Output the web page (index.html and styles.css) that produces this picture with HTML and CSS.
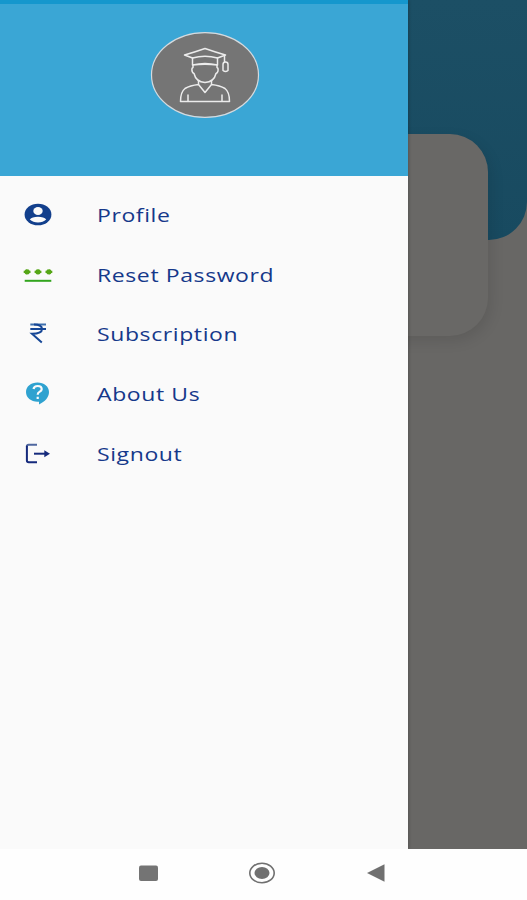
FILE: index.html
```
<!DOCTYPE html>
<html lang="en">
<head>
    <meta charset="UTF-8">
    <meta name="viewport" content="width=device-width, initial-scale=1.0">
    <title>Student Menu</title>
    <link rel="stylesheet" href="styles.css">
</head>
<body>
    <div class="screen">
        <!-- Dimmed page behind the drawer -->
        <main class="page">
            <div class="page-header"></div>
            <div class="page-card"></div>
        </main>

        <aside class="drawer">
            <header class="drawer-header">
                <svg class="avatar" viewBox="0 0 110 88" fill="none" stroke="#ececec" stroke-width="1.5" stroke-linejoin="round" stroke-linecap="round">
                    <ellipse cx="55" cy="44" rx="53.5" ry="42.3" fill="#757575" stroke="#d5dade" stroke-width="1.2"/>
                    <path d="M34.500 24 Q45 21 55 17.500 Q65 21 75.500 24 L67.500 27 Q55 23.500 42.500 27 Z"/>
                    <path d="M42.500 27 V34 Q55 31 67.500 34 V27 M42.500 34 Q55 32.500 67.500 34"/>
                    <path d="M43 34 V36.500 Q41.500 37 42 40 Q42.500 42 44 42.500 Q46 51 55 51.500 Q64 51 66 42.500 Q67.500 42 68 40 Q68.500 37 67 36.500 V34"/>
                    <path d="M74.500 24.500 V31 M73 39.500 V33.500 Q73 31 75.500 31 Q78 31 78 33.500 V39.500 Q75.500 41.500 73 39.500 Z"/>
                    <path d="M48.500 50 V53.500 L55 61.500 L61.500 53.500 V50 M48.500 53.500 Q40 54.500 35 57.500 Q30.500 61 30.500 70.500 H79.500 Q79.500 61 75 57.500 Q70 54.500 61.500 53.500 M38 70 V64 M72 70 V64"/>
                </svg>
            </header>

            <nav class="menu">
                <a class="menu-item">
                    <svg class="icon" viewBox="0 0 32 26">
                        <ellipse cx="16" cy="12.500" rx="13.400" ry="10.800" fill="#123f8c"/>
                        <ellipse cx="16" cy="9" rx="4.700" ry="4" fill="#fafafa"/>
                        <path d="M7.800 17.500 Q10 14.800 16 14.800 Q22 14.800 24.200 17.500 Q21 20.500 16 20.500 Q11 20.500 7.800 17.500 Z" fill="#fafafa"/>
                    </svg>
                    <span class="label">Profile</span>
                </a>
                <a class="menu-item">
                    <svg class="icon" viewBox="0 0 32 26" stroke="#55a616" stroke-width="2.2">
                        <path d="M2.700 18.800 H29.300" stroke="#32a51e" stroke-width="2"/>
                        <path d="M1.700 9.900 H8.500 M3.600 7.700 L6.600 12.100 M6.600 7.700 L3.600 12.100 M12.600 9.900 H19.400 M14.500 7.700 L17.500 12.100 M17.500 7.700 L14.500 12.100 M23.500 9.900 H30.300 M25.400 7.700 L28.400 12.100 M28.400 7.700 L25.400 12.100"/>
                    </svg>
                    <span class="label">Reset Password</span>
                </a>
                <a class="menu-item">
                    <svg class="icon" viewBox="0 0 32 26" fill="none" stroke="#164796" stroke-width="2">
                        <path d="M8.300 3.500 H24" stroke="#3e70ae"/>
                        <path d="M8.300 8 H24"/>
                        <path d="M12 3.500 Q20 3.500 20 8 Q20 12.800 10 12.800 L19.800 21.500"/>
                    </svg>
                    <span class="label">Subscription</span>
                </a>
                <a class="menu-item">
                    <svg class="icon" viewBox="0 0 32 26" fill="#2fa2d0">
                        <path d="M15.500 1.500 C22 1.500 27 5.500 27 11 C27 16.500 23 20.500 17 23.500 V20.700 H15.500 C9 20.700 4 16.600 4 11 C4 5.500 9 1.500 15.500 1.500 Z"/>
                        <path d="M11.500 8 Q12 5 15.700 5 Q19.700 5 19.700 8.200 Q19.700 9.700 17.500 10.900 Q15.700 11.900 15.700 13.800 M15.700 15.800 V18" fill="none" stroke="#fafafa" stroke-width="2.200"/>
                    </svg>
                    <span class="label">About Us</span>
                </a>
                <a class="menu-item">
                    <svg class="icon" viewBox="0 0 32 26" fill="none" stroke="#152a7c" stroke-width="2">
                        <path d="M15 3.700 H6.500 Q4.900 3.700 4.900 5.500" stroke="#4f679f"/>
                        <path d="M4.900 4.700 V19.500 Q4.900 21.300 6.700 21.300 H15"/>
                        <path d="M12 12.700 H24"/>
                        <path d="M22.300 9.200 L28 12.700 L22.300 16.200 Z" fill="#152a7c" stroke="none"/>
                    </svg>
                    <span class="label">Signout</span>
                </a>
            </nav>
        </aside>
    </div>

    <!-- System navigation -->
    <footer class="navbar">
        <svg viewBox="0 0 30 26"><rect x="6" y="5.500" width="19" height="15.500" rx="2" fill="#747474"/></svg>
        <svg viewBox="0 0 30 26">
            <ellipse cx="15" cy="13" rx="12.200" ry="9.800" fill="none" stroke="#707070" stroke-width="1.600"/>
            <ellipse cx="15" cy="13" rx="7.500" ry="6" fill="#707070"/>
        </svg>
        <svg viewBox="0 0 30 26"><path d="M6 13 L23.500 4.200 V21.800 Z" fill="#707070"/></svg>
    </footer>
</body>
</html>
```
FILE: styles.css
```
* { box-sizing: border-box; }
body { margin: 0; height: 900px; display: flex; flex-direction: column; background: #fefefe; font-family: "Open Sans", "Noto Sans", sans-serif; overflow: hidden; }

.screen { position: relative; height: 849px; overflow: hidden; }

.page { height: 100%; background: #686765; }
.page-header { height: 240px; background: linear-gradient(#1c4f65, #184a60); border-radius: 0 0 38px 38px; }
.page-card { height: 202px; margin: -106px 39px 0; background: #696866; border-radius: 38px; box-shadow: 3px 5px 14px rgba(0, 0, 0, 0.1); }

.drawer { position: absolute; top: 0; left: 0; width: 408px; height: 100%; background: #fafafa; box-shadow: 1px 0 3px rgba(0, 0, 0, 0.2); }
.drawer-header { height: 176px; padding: 27px 0 0 1px; border-top: 4px solid #1597cd; background: #3aa6d5; display: flex; justify-content: center; align-items: flex-start; }
.avatar { width: 110px; height: 88px; }

.menu { padding-top: 9px; }
.menu-item { display: flex; align-items: center; height: 59.800px; padding-left: 22px; color: #15388a; }
.icon { width: 32px; height: 26px; flex: none; }
.label { margin: 0 0 0 43px; font-size: 19px; letter-spacing: 0.500px; line-height: 26px; white-space: nowrap; transform: scaleX(1.21); transform-origin: left center; }

.navbar { height: 51px; padding: 0 136px 3px 133px; display: flex; justify-content: space-between; align-items: center; }
.navbar svg { width: 30px; height: 26px; }
```
